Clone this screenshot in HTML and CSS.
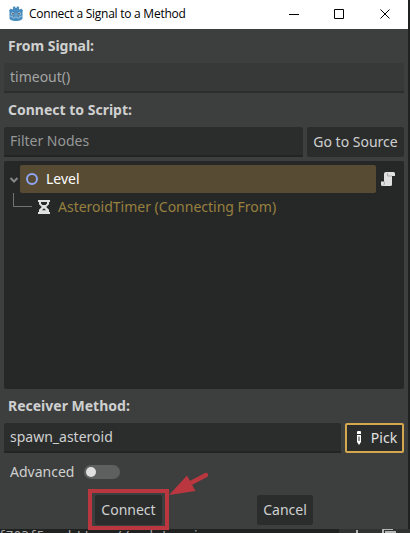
FILE: index.html
```html
<!DOCTYPE html>
<html lang="en">
<head>
<meta charset="utf-8">
<title>Connect a Signal to a Method</title>
<link rel="stylesheet" href="styles.css">
</head>
<body>
<div class="screen">
  <div class="window">
    <header class="titlebar">
      <svg class="logo" width="16" height="16" viewBox="0 0 16 16">
        <path fill="#478cbf" d="M1 4.500 2.800 2.600 4.200 3.400 5 3 4.900 1 7 .3 7.600 2h.8L9 .3l2.100.7L11 3l.8.400 1.400-.8L15 4.500 14.500 6v6c0 2-2.700 3-6.500 3s-6.500-1-6.500-3V6z"/>
        <circle cx="4.800" cy="7.700" r="1.500" fill="#c5dbe9"/><circle cx="11.200" cy="7.700" r="1.500" fill="#c5dbe9"/>
        <circle cx="5" cy="7.800" r=".9" fill="#414042"/><circle cx="11" cy="7.800" r=".9" fill="#414042"/>
        <path fill="none" stroke="#a9cbe2" stroke-width=".8" d="M8 7.500v2M2 10.200l2.500.4.3 1.400h1.700l.3-1h2.400l.3 1h1.700l.3-1.400 2.500-.4"/>
      </svg>
      <h1 class="title">Connect a Signal to a Method</h1>
      <svg class="controls" width="102" height="12" viewBox="0 0 102 12" fill="none" stroke="#000" stroke-width="1">
        <path d="M0 6.500h10M45.500 1.500h9v9h-9z"/><path d="m91.500 1.500 9 9m0-9-9 9"/>
      </svg>
    </header>
    <main class="dialog">
      <h2>From Signal:</h2>
      <div class="field readonly">timeout()</div>
      <h2>Connect to Script:</h2>
      <div class="row">
        <div class="field placeholder">Filter Nodes</div>
        <button class="button source">Go to Source</button>
      </div>
      <div class="tree">
        <div class="tree-row">
          <svg class="chevron" width="10" height="8" viewBox="0 0 10 8"><path d="m1.500 2 3.500 3.500L8.500 2" fill="none" stroke="#858686" stroke-width="2"/></svg>
          <div class="selected">
            <svg width="12" height="12" viewBox="0 0 12 12"><circle cx="6" cy="6" r="5" fill="none" stroke="#8da5f3" stroke-width="2"/></svg>
            <span class="level">Level</span>
          </div>
          <svg class="script" width="14" height="14" viewBox="0 0 14 14">
            <path fill="#e0e0e0" d="M5 0h7.500Q14 0 14 1.500V4h-3v8.500q0 1.500-1.500 1.500h-8Q0 14 0 12.500V9.500h3V2q0-2 2-2z"/>
            <path fill="none" stroke="#a5a6a6" stroke-width=".9" d="M6.500 1v3H11M3.300 9.500v2.800q0 .7-.8.700"/>
          </svg>
        </div>
        <div class="tree-row child">
          <svg class="branch" width="20" height="28" viewBox="0 0 20 28"><path d="M.5 0v13.500H19" fill="none" stroke="#727373"/></svg>
          <svg class="timer" width="12" height="14" viewBox="0 0 12 14">
            <path fill="#e0e0e0" fill-rule="evenodd" d="M0 0h12v2h-1v2.200L8.200 7 11 9.800V12h1v2H0v-2h1V9.800L3.800 7 1 4.200V2H0zM3 2v1.600L4.400 5h3.200L9 3.600V2zM6 8.300 4 10.300h4z"/>
          </svg>
          <span class="asteroid">AsteroidTimer (Connecting From)</span>
        </div>
      </div>
      <h2>Receiver Method:</h2>
      <div class="row">
        <div class="field method">spawn_asteroid</div>
        <button class="button pick">
          <svg width="4" height="14" viewBox="0 0 4 14"><path fill="#fff" d="M1 0h2q1 0 1 1v2H0V1q0-1 1-1zM0 4h4v7l-2 3-2-3z"/><path fill="#292c2c" d="M1.500 5.500h1V10h-1z"/></svg>
          <span>Pick</span>
        </button>
      </div>
      <div class="advanced">
        <span>Advanced</span>
        <span class="switch"><i></i></span>
      </div>
      <div class="actions">
        <button class="button connect">Connect</button>
        <button class="button cancel">Cancel</button>
      </div>
    </main>
  </div>
  <div class="backdrop">
    <pre class="console">f703f5   https://godotengine.org</pre>
    <svg class="tools" width="71" height="4" viewBox="0 0 71 4">
      <path fill="#303232" d="M0 0h71v4H0z"/><path fill="#b6b6b6" d="M17 1h2v3h-2zM43 0h11v1H45v3h-2zM46 2h11v2H46z"/>
    </svg>
  </div>
  <svg class="annotation" width="410" height="533" viewBox="0 0 410 533">
    <path d="M90 491h77v37H90z" fill="none" stroke="#ba373f" stroke-width="4"/>
    <path d="m206 475-19 10" fill="none" stroke="#ba373f" stroke-width="4.500" stroke-linecap="round"/>
    <path d="m169 495 18-19.500 8.500 15.500z" fill="#ba373f"/>
  </svg>
</div>
</body>
</html>
```
FILE: styles.css
```css
* { box-sizing: border-box; }
body { margin: 0; }
svg { display: block; flex: none; }
.screen {
  position: relative;
  width: 410px;
  height: 533px;
  overflow: hidden;
  background: #202222;
  color: #cfd0d0;
  font: 14px/20px "Noto Sans", sans-serif;
}
.window { width: 408px; height: 529px; background: #3d3f3e; }
.titlebar {
  display: flex;
  align-items: center;
  height: 29px;
  padding: 0 17px 2px 8px;
  background: #fff;
}
.title {
  margin: 0 0 0 5px;
  color: #000;
  font: 12px/18px "Open Sans", sans-serif;
  letter-spacing: -0.25px;
  white-space: nowrap;
}
.controls { margin-left: auto; }
.dialog { padding: 4px 4px 0; }
h2 {
  height: 30px;
  margin: 0;
  padding-left: 4px;
  font-size: 14px;
  font-weight: 700;
  line-height: 26px;
}
.field {
  flex: 1;
  height: 30px;
  padding: 0 6px;
  border-bottom: 2px solid #222424;
  border-radius: 2px 2px 0 0;
  background: #2b2d2d;
  line-height: 28px;
}
.field.readonly { background: #373938; border-color: #2c2e2e; color: #a4a5a5; }
.field.placeholder { color: #969797; }
.readonly + h2, .tree + h2 { height: 34px; line-height: 34px; }
.row { display: flex; gap: 4px; }
.button {
  display: flex;
  align-items: center;
  justify-content: center;
  height: 30px;
  margin: 0;
  padding: 0;
  border: 0;
  border-radius: 2px;
  background: #2b2d2d;
  color: inherit;
  font: inherit;
  white-space: nowrap;
}
.source { width: 97px; }
.tree {
  height: 228px;
  margin-top: 4px;
  padding: 4px 4px 0;
  border-radius: 2px;
  background: #262828;
}
.tree-row { display: flex; align-items: center; height: 28px; }
.chevron { margin: 1px 1px 0; }
.selected {
  display: flex;
  align-items: center;
  gap: 8px;
  width: 356px;
  height: 28px;
  padding-left: 6px;
  border-radius: 2px;
  background: #574b34;
}
.level { color: #fff; }
.script { margin-left: 5px; }
.child { padding-left: 5px; }
.timer { margin-left: 5px; }
.asteroid { margin-left: 8px; color: #98803f; }
.pick {
  width: 59px;
  gap: 10px;
  padding-left: 5px;
  border: 2px solid #d5a84f;
  color: #e0e0e0;
}
.advanced { display: flex; align-items: center; height: 38px; padding-left: 6px; }
.switch {
  width: 36px;
  height: 14px;
  margin-left: 10px;
  padding: 2px;
  border-radius: 7px;
  background: #5e605f;
}
.switch i { display: block; width: 10px; height: 10px; border-radius: 50%; background: #e0e0e0; }
.actions { display: flex; gap: 95px; margin-top: 4px; padding-left: 91px; }
.connect { width: 67px; }
.cancel { width: 56px; }
.backdrop { display: flex; justify-content: space-between; width: 410px; height: 4px; overflow: hidden; }
.console {
  margin: 0 0 0 -2px;
  color: #aaa;
  font: 13px/14px "DejaVu Sans Mono", monospace;
  letter-spacing: -0.08px;
}
.annotation { position: absolute; top: 0; left: 0; }
```
